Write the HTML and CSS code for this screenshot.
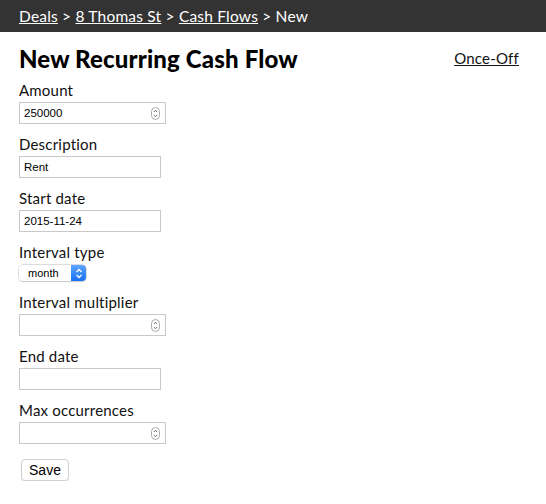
FILE: index.html
```html
<!DOCTYPE html>
<html>
<head>
<meta charset="utf-8">
<link rel="stylesheet" href="styles.css">
</head>
<body>
<nav class="topbar">
  <a href="#">Deals</a> &gt; <a href="#">8 Thomas St</a> &gt; <a href="#">Cash Flows</a> &gt; New
</nav>
<main class="page">
  <div class="title-row">
    <h1>New Recurring Cash Flow</h1>
    <a href="#" class="alt-link">Once-Off</a>
  </div>
  <form class="form">
    <div class="field">
      <label>Amount</label>
      <span class="num-wrap"><input class="num" type="text" value="250000"><svg class="spin" width="9" height="13" viewBox="0 0 9 13"><rect x="0.5" y="0.5" width="8" height="12" rx="4" fill="#fff" stroke="#aaa"/><path d="M2.8 5 L4.5 3.3 L6.2 5" fill="none" stroke="#555" stroke-width="0.9"/><path d="M2.8 8 L4.5 9.7 L6.2 8" fill="none" stroke="#555" stroke-width="0.9"/></svg></span>
    </div>
    <div class="field">
      <label>Description</label>
      <input class="txt" type="text" value="Rent">
    </div>
    <div class="field">
      <label>Start date</label>
      <input class="txt" type="text" value="2015-11-24">
    </div>
    <div class="field">
      <label>Interval type</label>
      <span class="sel-wrap"><select class="sel"><option>month</option></select><span class="sel-btn"><svg width="8" height="11" viewBox="0 0 8 11"><path d="M1.5 4 L4 1.5 L6.5 4" fill="none" stroke="#fff" stroke-width="1.3"/><path d="M1.5 7 L4 9.5 L6.5 7" fill="none" stroke="#fff" stroke-width="1.3"/></svg></span></span>
    </div>
    <div class="field">
      <label>Interval multiplier</label>
      <span class="num-wrap"><input class="num" type="text" value=""><svg class="spin" width="9" height="13" viewBox="0 0 9 13"><rect x="0.5" y="0.5" width="8" height="12" rx="4" fill="#fff" stroke="#aaa"/><path d="M2.8 5 L4.5 3.3 L6.2 5" fill="none" stroke="#555" stroke-width="0.9"/><path d="M2.8 8 L4.5 9.7 L6.2 8" fill="none" stroke="#555" stroke-width="0.9"/></svg></span>
    </div>
    <div class="field">
      <label>End date</label>
      <input class="txt" type="text" value="">
    </div>
    <div class="field">
      <label>Max occurrences</label>
      <span class="num-wrap"><input class="num" type="text" value=""><svg class="spin" width="9" height="13" viewBox="0 0 9 13"><rect x="0.5" y="0.5" width="8" height="12" rx="4" fill="#fff" stroke="#aaa"/><path d="M2.8 5 L4.5 3.3 L6.2 5" fill="none" stroke="#555" stroke-width="0.9"/><path d="M2.8 8 L4.5 9.7 L6.2 8" fill="none" stroke="#555" stroke-width="0.9"/></svg></span>
    </div>
    <div class="actions">
      <button type="button" class="btn">Save</button>
    </div>
  </form>
</main>
</body>
</html>
```
FILE: styles.css
```css
html, body {
  margin: 0;
  padding: 0;
  background: #fff;
}
body {
  font-family: "Lato", "Open Sans", sans-serif;
  color: #111;
  letter-spacing: 0.2px;
}
.topbar {
  background: #333;
  color: #fff;
  height: 32px;
  box-sizing: border-box;
  padding: 7px 19px 0;
  font-size: 15.5px;
  line-height: 18px;
  letter-spacing: 0.2px;
}
.topbar a {
  color: #fff;
  text-decoration: underline;
}
.page {
  padding: 0 27px 0 19px;
}
.title-row {
  display: flex;
  justify-content: space-between;
  align-items: flex-start;
  margin-top: 13px;
}
h1 {
  margin: 0;
  font-size: 24px;
  line-height: 28px;
  font-weight: 900;
  letter-spacing: 0.15px;
  color: #000;
}
.alt-link {
  color: #111;
  font-size: 15px;
  line-height: 18px;
  margin-top: 4px;
}
.form {
  display: flex;
  flex-direction: column;
  gap: 12px;
  margin-top: 9px;
}
.field {
  display: flex;
  flex-direction: column;
  align-items: flex-start;
}
.field label {
  font-size: 15px;
  line-height: 17px;
  margin-bottom: 3px;
}
.txt, .num-wrap {
  box-sizing: border-box;
  height: 22px;
  border: 1px solid #c8c8c8;
  background: #fff;
  font-family: "Liberation Sans", Arial, sans-serif;
  font-size: 11.5px;
  letter-spacing: 0;
  color: #000;
}
.txt {
  width: 142px;
  padding: 0 4px;
  outline: none;
}
.num-wrap {
  width: 147px;
  display: flex;
  align-items: center;
  padding: 0 3px 0 4px;
}
.num {
  flex: 1;
  min-width: 0;
  border: 0;
  padding: 0;
  margin: 0;
  font: inherit;
  outline: none;
  background: transparent;
}
.spin {
  flex: none;
  margin-right: 2px;
}
.sel-wrap {
  display: inline-flex;
  height: 16px;
  margin: 1px 0 1px;
  border-radius: 4px;
  box-shadow: 0 0 0 0.5px #bbb, 0 1px 1px rgba(0,0,0,0.15);
  overflow: hidden;
}
.sel {
  -webkit-appearance: none;
  appearance: none;
  border: 0;
  background: #fff;
  font-family: "Liberation Sans", Arial, sans-serif;
  font-size: 11px;
  width: 52px;
  padding: 0 0 0 9px;
  height: 16px;
  outline: none;
  color: #000;
}
.sel-btn {
  width: 15px;
  background: linear-gradient(#5aa6ff, #1a6ff5);
  display: flex;
  align-items: center;
  justify-content: center;
}
.actions {
  margin-top: 3px;
}
.btn {
  margin-left: 2px;
  font-family: "Liberation Sans", Arial, sans-serif;
  font-size: 14px;
  height: 22px;
  width: 48px;
  background: #fff;
  border: 1px solid #d0d0d0;
  border-radius: 4px;
  box-shadow: 0 1px 1px rgba(0,0,0,0.1);
  color: #000;
  padding: 0;
}
```
